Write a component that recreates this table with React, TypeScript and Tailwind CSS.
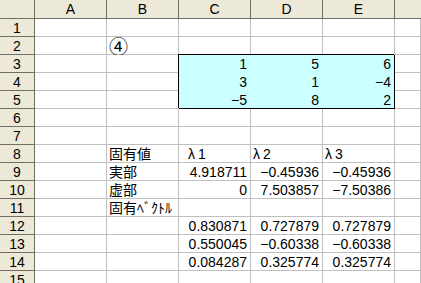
import React from 'react';

const COLS = ['A', 'B', 'C', 'D', 'E', ''];

type Cell = { text?: string; align?: 'left' | 'right'; indent?: boolean; cjk?: boolean };

// rows 1..15, columns A..F (C-E of rows 3-5 drawn as the highlighted block)
const SHEET: Record<number, Cell[]> = {
  2: [{}, { text: '④', cjk: true }],
  8: [{}, { text: '固有値' }, { text: 'λ1', indent: true }, { text: 'λ2' }, { text: 'λ3' }],
  9: [{}, { text: '実部' }, { text: '4.918711', align: 'right' }, { text: '−0.45936', align: 'right' }, { text: '−0.45936', align: 'right' }],
  10: [{}, { text: '虚部' }, { text: '0', align: 'right' }, { text: '7.503857', align: 'right' }, { text: '−7.50386', align: 'right' }],
  11: [{}, { text: '固有ﾍﾞｸﾄﾙ' }],
  12: [{}, {}, { text: '0.830871', align: 'right' }, { text: '0.727879', align: 'right' }, { text: '0.727879', align: 'right' }],
  13: [{}, {}, { text: '0.550045', align: 'right' }, { text: '−0.60338', align: 'right' }, { text: '−0.60338', align: 'right' }],
  14: [{}, {}, { text: '0.084287', align: 'right' }, { text: '0.325774', align: 'right' }, { text: '0.325774', align: 'right' }],
};

const MATRIX = [
  ['1', '5', '6'],
  ['3', '1', '−4'],
  ['−5', '8', '2'],
];

const Lambda: React.FC<{ text: string }> = ({ text }) => (
  <>
    <span className="mr-[3px]">{text[0]}</span>
    {text.slice(1)}
  </>
);

const GridCell: React.FC<{ cell?: Cell }> = ({ cell }) => {
  const right = cell?.align === 'right';
  const pad = right ? 'justify-end pr-[3px]' : cell?.indent ? 'pl-[9px]' : 'pl-[2px]';
  return (
    <div
      className={`flex items-center overflow-visible whitespace-nowrap border-r border-b border-[#c0c0c0] bg-white ${pad} ${
        cell?.cjk ? "font-['Noto_Sans_CJK_JP',sans-serif] text-[19px]" : ''
      }`}
    >
      {cell?.text && (cell.text.startsWith('λ') ? <Lambda text={cell.text} /> : cell.text)}
    </div>
  );
};

export default function App() {
  const rows = Array.from({ length: 15 }, (_, i) => i + 1);

  return (
    <div className="h-[283px] w-[421px] overflow-hidden bg-white font-['Liberation_Sans','Noto_Sans_CJK_JP',sans-serif] text-[14px] leading-none text-black">
      <div className="grid grid-cols-[35px_72px_72px_72px_72px_72px_1fr] grid-rows-[19px] auto-rows-[18px]">
        {/* column headers */}
        <div className="border-r border-b border-[#716f64] bg-[#ece9d8]" />
        {COLS.map((c, i) => (
          <div
            key={i}
            className={`flex items-center justify-center border-b border-[#716f64] bg-[#ece9d8] ${
              i < COLS.length - 1 ? 'border-r' : ''
            }`}
          >
            {c}
          </div>
        ))}

        {rows.map((r) => {
          const data = SHEET[r] || [];
          const inBlock = r >= 3 && r <= 5;
          return (
            <React.Fragment key={r}>
              <div className="flex items-center justify-center border-r border-b border-[#716f64] bg-[#ece9d8]">
                {r}
              </div>
              <GridCell cell={data[0]} />
              <GridCell cell={data[1]} />
              {r === 3 && (
                <div className="relative z-10 col-span-3 row-span-3 grid grid-cols-[72px_72px_71px] grid-rows-[18px_18px_17px] border-r border-b border-black bg-[#ccffff] shadow-[-1px_-1px_0_0_#000]">
                  {MATRIX.map((row, ri) =>
                    row.map((v, ci) => (
                      <div
                        key={`${ri}-${ci}`}
                        className={`flex items-center justify-end ${ci < 2 ? 'pr-[4px]' : 'pr-[3px]'}`}
                      >
                        {v}
                      </div>
                    ))
                  )}
                </div>
              )}
              {!inBlock && (
                <>
                  <GridCell cell={data[2]} />
                  <GridCell cell={data[3]} />
                  <GridCell cell={data[4]} />
                </>
              )}
              <GridCell />
            </React.Fragment>
          );
        })}
      </div>
    </div>
  );
}
